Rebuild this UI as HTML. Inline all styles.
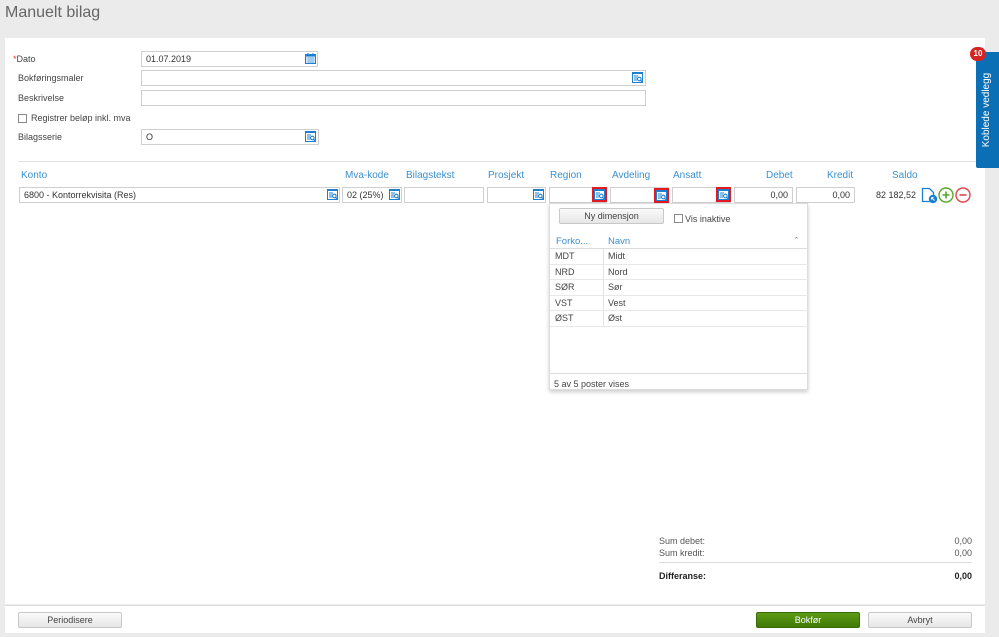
<!DOCTYPE html>
<html><head><meta charset="utf-8"><style>
*{box-sizing:border-box;margin:0;padding:0}
body{width:999px;height:637px;background:#ebebeb;font-family:"Liberation Sans",sans-serif;font-size:9px;color:#333;position:relative;overflow:hidden}
.a{position:absolute}
.inp{position:absolute;height:16px;border:1px solid #cfcfcf;background:#fff;font-size:9px;line-height:14px;padding-left:4px;color:#333}
.lbl{position:absolute;font-size:9px;color:#444}
.hd{position:absolute;font-size:10px;color:#3a8fd0}
.ic{position:absolute;width:11px;height:11px}
.red{outline:2px solid #e21b23;outline-offset:0px;background:#fff}
.btn{position:absolute;height:16px;border:1px solid #c8c8c8;border-radius:2px;background:linear-gradient(#fafafa,#e6e6e6);text-align:center;line-height:14px;font-size:9px;color:#444}
.row{position:absolute;left:0;width:258px;height:15.5px;border-bottom:1px solid #e8e8e8;font-size:9px;line-height:15px;color:#444}
.row span{position:absolute}
</style></head><body>
<svg width="0" height="0" style="position:absolute"><defs>
<symbol id="lk" viewBox="0 0 11 11"><rect x="0.5" y="0.5" width="10" height="10" fill="#fff" stroke="#1c7fd0"/><rect x="0" y="0" width="11" height="2" fill="#1c7fd0"/><path d="M2 4h4M2 6h3M2 8h3" stroke="#1c7fd0" stroke-width="1"/><circle cx="7.3" cy="7" r="1.8" fill="none" stroke="#1c7fd0" stroke-width="1.1"/><path d="M8.5 8.3l1.5 1.5" stroke="#1c7fd0" stroke-width="1.2"/></symbol>
</defs></svg>
<div class="a" style="left:5px;top:4px;font-size:16px;color:#666">Manuelt bilag</div>
<div class="a" style="left:5px;top:38px;width:980px;height:566px;background:#fff"></div>
<div class="a" style="left:5px;top:605px;width:980px;height:28px;background:#fff;border-top:1px solid #ddd"></div>

<div class="lbl" style="left:13px;top:54px"><span style="color:#d33">*</span>Dato</div>
<div class="inp" style="left:141px;top:51px;width:177px">01.07.2019</div>
<svg class="a" style="left:305px;top:53px" width="11" height="11" viewBox="0 0 11 11"><rect x="0.5" y="1.5" width="10" height="9" fill="#cfe6fa" stroke="#1c7fd0"/><rect x="0" y="1" width="11" height="2.5" fill="#1c7fd0"/><path d="M3 0v2M8 0v2" stroke="#1c7fd0"/><path d="M2 5h7M2 7h7M2 9h7M4 4v6M6 4v6M8 4v6" stroke="#6aaee6" stroke-width="0.6"/></svg>
<div class="lbl" style="left:18px;top:73px">Bokføringsmaler</div>
<div class="inp" style="left:141px;top:70px;width:505px"></div>
<svg class="ic" style="left:632px;top:72px"><use href="#lk"/></svg>
<div class="lbl" style="left:18px;top:93px">Beskrivelse</div>
<div class="inp" style="left:141px;top:90px;width:505px"></div>
<div class="a" style="left:18px;top:114px;width:9px;height:9px;border:1px solid #888;background:#fff"></div>
<div class="lbl" style="left:31px;top:113px">Registrer beløp inkl. mva</div>
<div class="lbl" style="left:18px;top:132px">Bilagsserie</div>
<div class="inp" style="left:141px;top:129px;width:178px">O</div>
<svg class="ic" style="left:305px;top:131px"><use href="#lk"/></svg>
<div class="a" style="left:18px;top:161px;width:967px;height:1px;background:#e2e2e2"></div>

<div class="hd" style="left:21px;top:170px">Konto</div>
<div class="hd" style="left:345px;top:170px">Mva-kode</div>
<div class="hd" style="left:406px;top:170px">Bilagstekst</div>
<div class="hd" style="left:488px;top:170px">Prosjekt</div>
<div class="hd" style="left:550px;top:170px">Region</div>
<div class="hd" style="left:612px;top:170px">Avdeling</div>
<div class="hd" style="left:673px;top:170px">Ansatt</div>
<div class="hd" style="left:766px;top:170px">Debet</div>
<div class="hd" style="left:827px;top:170px">Kredit</div>
<div class="hd" style="left:892px;top:170px">Saldo</div>

<div class="inp" style="left:19px;top:187px;width:321px">6800 - Kontorrekvisita (Res)</div>
<svg class="ic" style="left:327px;top:189px"><use href="#lk"/></svg>
<div class="inp" style="left:342px;top:187px;width:60px">02 (25%)</div>
<svg class="ic" style="left:389px;top:189px"><use href="#lk"/></svg>
<div class="inp" style="left:404px;top:187px;width:80px"></div>
<div class="inp" style="left:487px;top:187px;width:59px"></div>
<svg class="ic" style="left:533px;top:189px"><use href="#lk"/></svg>
<div class="inp" style="left:549px;top:187px;width:58px"></div>
<svg class="ic red" style="left:594px;top:189px"><use href="#lk"/></svg>
<div class="inp" style="left:610px;top:187px;width:59px"></div>
<svg class="ic red" style="left:656px;top:190px"><use href="#lk"/></svg>
<div class="inp" style="left:672px;top:187px;width:59px"></div>
<svg class="ic red" style="left:718px;top:189px"><use href="#lk"/></svg>
<div class="inp" style="left:734px;top:187px;width:59px;text-align:right;padding-right:4px">0,00</div>
<div class="inp" style="left:796px;top:187px;width:59px;text-align:right;padding-right:4px">0,00</div>
<div class="a" style="left:860px;top:190px;width:56px;text-align:right;font-size:9px">82 182,52</div>
<svg class="a" style="left:921px;top:187px" width="17" height="17" viewBox="0 0 17 17"><path d="M1.5 1.5h7l4 4v9h-11z" fill="#fff" stroke="#1c7fd0" stroke-width="1.3"/><circle cx="12" cy="12" r="4.2" fill="#1c7fd0"/><path d="M10.5 10.5l3 3M10.5 10.5h2M10.5 10.5v2" stroke="#fff" stroke-width="1"/></svg>
<svg class="a" style="left:938px;top:187px" width="16" height="16" viewBox="0 0 16 16"><circle cx="8" cy="8" r="7" fill="#fff" stroke="#55a82a" stroke-width="1.4"/><path d="M8 4.5v7M4.5 8h7" stroke="#55a82a" stroke-width="1.6"/></svg>
<svg class="a" style="left:955px;top:187px" width="16" height="16" viewBox="0 0 16 16"><circle cx="8" cy="8" r="7" fill="#fff" stroke="#e0474c" stroke-width="1.4"/><path d="M4.5 8h7" stroke="#e0474c" stroke-width="1.6"/></svg>

<div class="a" style="left:549px;top:203px;width:259px;height:187px;background:#fff;border:1px solid #ddd;box-shadow:0 2px 4px rgba(0,0,0,.2)">
<div class="btn" style="left:9px;top:4px;width:105px">Ny dimensjon</div>
<div class="a" style="left:124px;top:10px;width:9px;height:9px;border:1px solid #888"></div>
<div class="a" style="left:135px;top:10px;font-size:9px;color:#444">Vis inaktive</div>
<div class="a" style="left:6px;top:32px;font-size:9.5px;color:#3a8fd0">Forko...</div>
<div class="a" style="left:58px;top:32px;font-size:9.5px;color:#3a8fd0">Navn</div>
<div class="a" style="left:245px;top:32px;font-size:9px;color:#666">ˆ</div>
<div class="a" style="left:0;top:44px;width:258px;height:1px;background:#ddd"></div>
<div class="a" style="left:53px;top:45px;width:1px;height:78px;background:#e3e3e3"></div>
<div class="row" style="top:45px"><span style="left:5px">MDT</span><span style="left:58px">Midt</span></div>
<div class="row" style="top:60.5px"><span style="left:5px">NRD</span><span style="left:58px">Nord</span></div>
<div class="row" style="top:76px"><span style="left:5px">SØR</span><span style="left:58px">Sør</span></div>
<div class="row" style="top:91.5px"><span style="left:5px">VST</span><span style="left:58px">Vest</span></div>
<div class="row" style="top:107px"><span style="left:5px">ØST</span><span style="left:58px">Øst</span></div>
<div class="a" style="left:0;top:169px;width:258px;height:1px;background:#ddd"></div>
<div class="a" style="left:4px;top:175px;font-size:9px;color:#444">5 av 5 poster vises</div>
</div>

<div class="a" style="left:659px;top:536px;color:#555">Sum debet:</div>
<div class="a" style="left:900px;top:536px;width:72px;text-align:right;color:#555">0,00</div>
<div class="a" style="left:659px;top:548px;color:#555">Sum kredit:</div>
<div class="a" style="left:900px;top:548px;width:72px;text-align:right;color:#555">0,00</div>
<div class="a" style="left:659px;top:562px;width:313px;height:1px;background:#ddd"></div>
<div class="a" style="left:659px;top:571px;font-weight:bold;color:#222">Differanse:</div>
<div class="a" style="left:900px;top:571px;width:72px;text-align:right;font-weight:bold;color:#222">0,00</div>

<div class="btn" style="left:18px;top:612px;width:104px">Periodisere</div>
<div class="btn" style="left:756px;top:612px;width:104px;background:linear-gradient(#5d9b16,#3f7a06);border-color:#3a6d08;color:#fff">Bokfør</div>
<div class="btn" style="left:868px;top:612px;width:104px">Avbryt</div>

<div class="a" style="left:976px;top:52px;width:23px;height:116px;background:#0b6fb5;border-radius:2px 0 0 2px"></div>
<div class="a" style="left:987px;top:110px;width:110px;transform:translate(-55px,-6px) rotate(-90deg);text-align:center;color:#fff;font-size:10px;line-height:12px">Koblede vedlegg</div>
<div class="a" style="left:970px;top:47px;width:16px;height:14px;border-radius:7px;background:#d42525;color:#fff;font-size:8px;text-align:center;line-height:14px;font-weight:bold">10</div>
</body></html>
